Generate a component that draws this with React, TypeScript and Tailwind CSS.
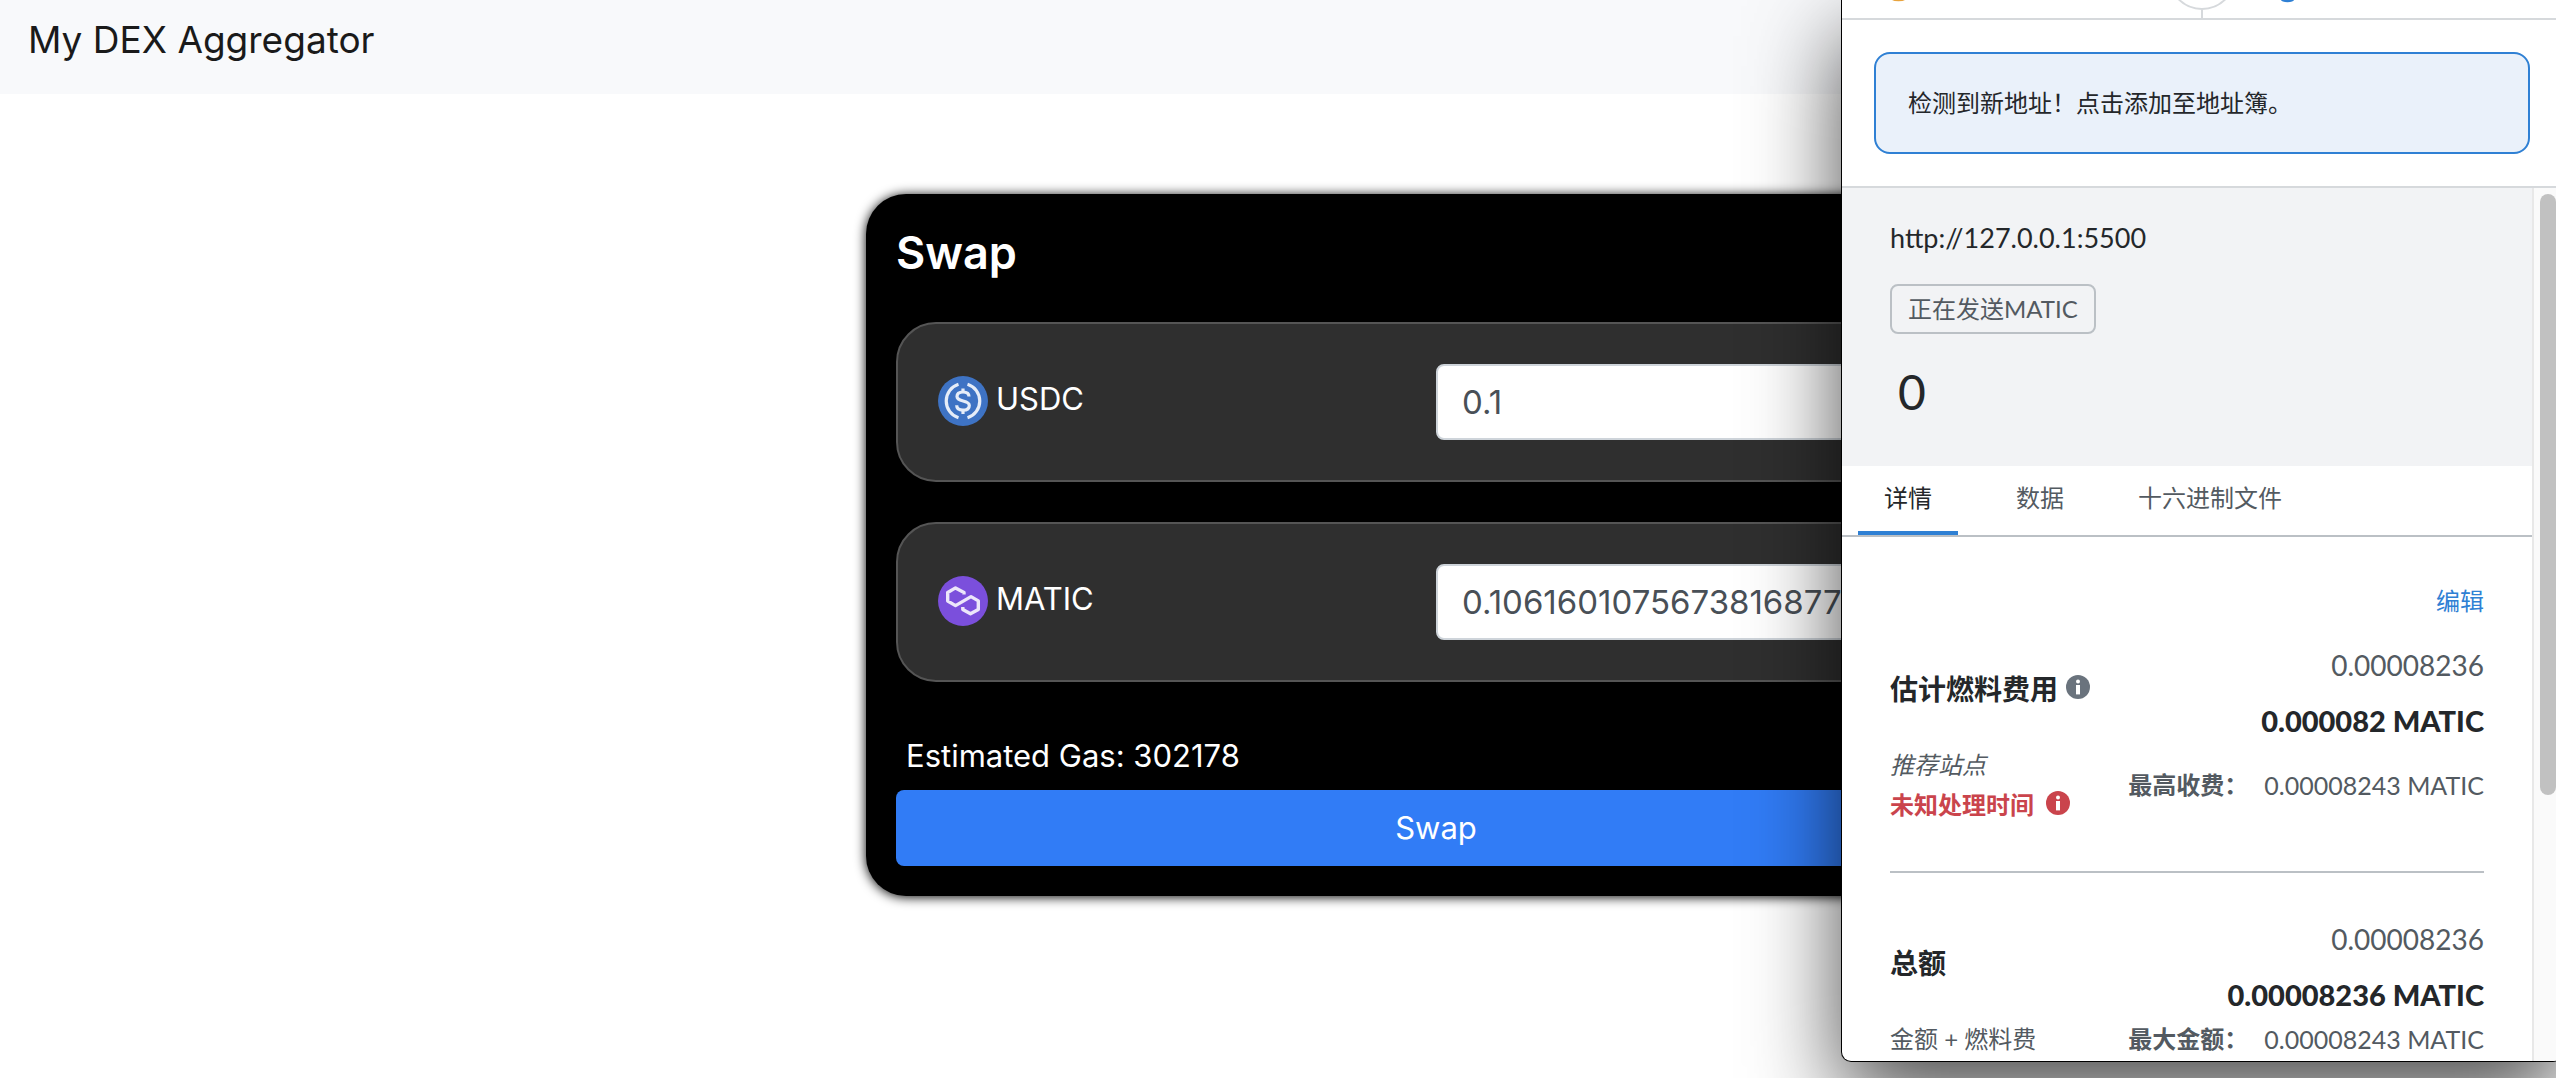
import type { ReactNode } from "react";

function UsdcLogo() {
  return (
    <svg viewBox="0 0 50 50" className="size-[50px] shrink-0" aria-hidden="true">
      <circle cx="25" cy="25" r="25" fill="#3e73c4" />
      <g fill="none" stroke="#e6edf8" strokeWidth="3.2">
        <path d="M20.5 8.3A17.5 17.5 0 0 0 20.5 41.7" />
        <path d="M29.5 8.3A17.5 17.5 0 0 1 29.5 41.7" />
        <path d="M31 20.5c0-3-2.5-4.5-6-4.5s-6 1.6-6 4.5c0 6 12.3 3 12.3 9 0 3-2.6 4.7-6.3 4.7s-6.3-1.7-6.3-4.9" />
        <path d="M25 12.5v4M25 34v4" />
      </g>
    </svg>
  );
}

function MaticLogo() {
  return (
    <svg viewBox="0 0 50 50" className="size-[50px] shrink-0" aria-hidden="true">
      <circle cx="25" cy="25" r="25" fill="#7b4fdc" />
      <path
        d="M26 18.5V16.5L17.5 11.9L9.7 16.5V25L17.5 29.6L33 20.6L40.3 24.9V33.4L32.5 37.8L24.8 33.4V31"
        fill="none"
        stroke="#ece6fa"
        strokeWidth="3.4"
        strokeLinejoin="round"
      />
    </svg>
  );
}

function InfoIcon({ className }: { className: string }) {
  return (
    <svg viewBox="0 0 24 24" className={className} aria-hidden="true">
      <circle cx="12" cy="12" r="12" fill="currentColor" />
      <circle cx="12" cy="6.4" r="2" fill="#fff" />
      <path d="M10 10h4v9.4h-4z" fill="#fff" />
    </svg>
  );
}

function TokenRow({ logo, symbol, value }: { logo: ReactNode; symbol: string; value: string }) {
  const id = `amount-${symbol}`;
  return (
    <div className="grid grid-cols-2 items-center rounded-[40px] border-2 border-[#555] bg-[#2f2f2f] p-10">
      <label htmlFor={id} className="flex items-center gap-2 pb-0.5 text-[31px] leading-[46px] text-white">
        {logo}
        <span className="pb-1">{symbol}</span>
      </label>
      <input
        id={id}
        defaultValue={value}
        className="h-[76px] w-full rounded-lg border-2 border-[#ced4da] bg-white px-6 text-[33px] text-[#495057]"
      />
    </div>
  );
}

function SwapCard() {
  return (
    <section className="mx-auto mt-[100px] w-[1140px] rounded-[40px] bg-black p-[30px] text-white shadow-[0_1px_12px_#000]">
      <h4 className="text-[45px] leading-[58px] font-semibold">Swap</h4>
      <div className="mt-10 flex flex-col gap-10">
        <TokenRow logo={<UsdcLogo />} symbol="USDC" value="0.1" />
        <TokenRow logo={<MaticLogo />} symbol="MATIC" value="0.1061601075673816877" />
      </div>
      <div className="mt-[50px] px-[10px] text-[31px] leading-[48px]">Estimated Gas: 302178</div>
      <button type="button" className="mt-[10px] h-[76px] w-full rounded-lg bg-[#317cf6] text-[31px]">
        Swap
      </button>
    </section>
  );
}

function Tab({ label, active = false }: { label: string; active?: boolean }) {
  return (
    <button
      type="button"
      role="tab"
      aria-selected={active}
      className={
        active
          ? "h-[69px] min-w-[100px] border-b-4 border-[#2f80d4] px-4 pb-0.5 text-[#24272a]"
          : "h-[69px] min-w-[100px] border-b-4 border-transparent px-4 pb-0.5 text-[#535a61]"
      }
    >
      {label}
    </button>
  );
}

type FeeProps = {
  title: ReactNode;
  secondary: string;
  primary: string;
  note: ReactNode;
  maxLabel: string;
  maxValue: string;
};

function FeeBlock({ title, secondary, primary, note, maxLabel, maxValue }: FeeProps) {
  return (
    <div>
      <div className="flex items-start justify-between text-[28px] leading-10">
        <div className="mt-6 flex font-bold text-[#24272a]">{title}</div>
        <div className="flex flex-col items-end gap-4">
          <span className="text-[#535a61]">{secondary}</span>
          <span className="text-[29px] font-black text-[#24272a]">{primary}</span>
        </div>
      </div>
      <div className="mt-1 flex items-center justify-between leading-10 text-[#535a61]">
        <div>{note}</div>
        <div className="flex gap-4">
          <span className="font-bold">{maxLabel}</span>
          <span className="text-[25px]">{maxValue}</span>
        </div>
      </div>
    </div>
  );
}

function WalletPopup() {
  return (
    <aside className="absolute top-0 -right-[7px] w-[722px] overflow-hidden rounded-b-[10px] border border-t-0 border-black bg-white font-[Lato,'Noto_Sans_CJK_SC',sans-serif] text-[24px] text-[#24272a] shadow-[0_36px_90px_rgba(0,0,0,0.7)]">
      <svg viewBox="0 0 720 18" className="block h-[18px] w-full" aria-hidden="true">
        <path d="M50 0a7 2 0 0 0 13 0z" fill="#e8a33d" />
        <circle cx="360" cy="-24" r="33" fill="none" stroke="#d6d9dc" strokeWidth="2" />
        <path d="M360 10v8" stroke="#d6d9dc" strokeWidth="2" />
        <path d="M439 0a6 2 0 0 0 13 0z" fill="#2f80d4" />
      </svg>
      <div className="border-y-2 border-[#d6d9dc] p-8">
        <button
          type="button"
          className="block h-[102px] w-full rounded-2xl border-2 border-[#2f80d4] bg-[#eaf1fa] px-8 text-left"
        >
          检测到新地址！点击添加至地址簿。
        </button>
      </div>
      <div className="flex">
        <div className="min-w-0 flex-1 pb-0.5">
          <div className="flex flex-col items-start bg-[#f2f3f5] px-12 pt-[30px] pb-[46px]">
            <span className="text-[27px] leading-10">http://127.0.0.1:5500</span>
            <span className="mt-[26px] rounded-lg border-2 border-[#bbc0c5] px-4 leading-[46px] text-[#535a61]">
              正在发送MATIC
            </span>
            <span className="mt-[30px] px-2 text-[48px] leading-[56px]">0</span>
          </div>
          <div role="tablist" className="flex gap-8 border-b-2 border-[#bbc0c5] px-4">
            <Tab label="详情" active />
            <Tab label="数据" />
            <Tab label="十六进制文件" />
          </div>
          <div className="px-12 pt-12">
            <div className="flex justify-end">
              <a href="#edit" className="leading-8 text-[#2f80d4]">
                编辑
              </a>
            </div>
            <div className="mt-7">
              <FeeBlock
                title={
                  <>
                    估计燃料费用
                    <InfoIcon className="mt-1.5 ml-2 size-6 text-[#6a737d]" />
                  </>
                }
                secondary="0.00008236"
                primary="0.000082 MATIC"
                note={
                  <>
                    <div className="italic">推荐站点</div>
                    <div className="flex font-bold text-[#ca444c]">
                      未知处理时间
                      <InfoIcon className="mt-1.5 ml-3 size-6" />
                    </div>
                  </>
                }
                maxLabel="最高收费："
                maxValue="0.00008243 MATIC"
              />
            </div>
            <hr className="my-[46px] border-t-2 border-[#bbc0c5]" />
            <FeeBlock
              title="总额"
              secondary="0.00008236"
              primary="0.00008236 MATIC"
              note="金额 + 燃料费"
              maxLabel="最大金额："
              maxValue="0.00008243 MATIC"
            />
          </div>
        </div>
        <div className="w-[30px] border-l-2 border-[#e8e8e8] bg-[#fafafa] pt-1.5 pl-1.5">
          <div className="h-[601px] w-4 rounded-full bg-[#c1c1c1]" />
        </div>
      </div>
    </aside>
  );
}

export default function App() {
  return (
    <div className="relative min-h-screen overflow-hidden bg-white font-[Inter,sans-serif]">
      <div className="w-[calc(100%+316px)]">
        <header className="bg-[#f8f9fb] px-7 pt-2.5 pb-6 text-[37px] leading-[60px] text-[#1a1a1a]">
          My DEX Aggregator
        </header>
        <SwapCard />
      </div>
      <WalletPopup />
    </div>
  );
}
